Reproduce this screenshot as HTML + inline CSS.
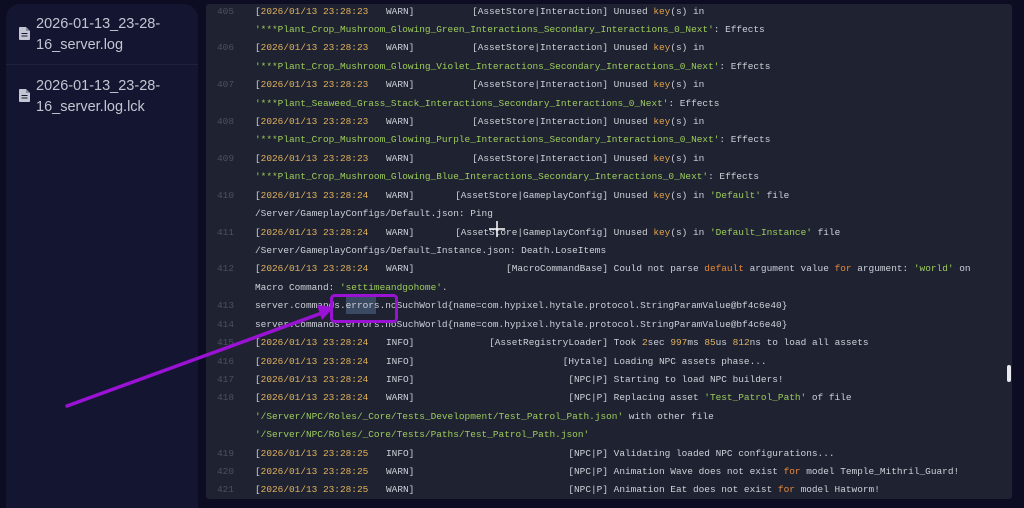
<!DOCTYPE html>
<html><head><meta charset="utf-8"><style>
*{margin:0;padding:0;box-sizing:border-box}
html,body{width:1024px;height:508px;overflow:hidden}
body{background:#0c0c22;position:relative;font-family:"Liberation Sans",sans-serif}
#side{position:absolute;left:6px;top:4px;width:192px;height:504px;background:#141631;border-radius:14px 14px 0 0}
.item{position:absolute;left:30px;color:#c3c6d2;font-size:14.5px;line-height:21px}
.ic{position:absolute;left:13px;width:11px;height:13px}
#div{position:absolute;left:0;top:60px;width:192px;height:1px;background:#20223a}
#log{position:absolute;left:206px;top:4px;width:806px;height:495px;background:#1f2230;border-radius:3px;overflow:hidden;font-family:"Liberation Mono",monospace;font-size:9.45px;color:#cdd1d9}
.r{position:absolute;left:0;height:18.42px;line-height:18.42px;white-space:pre;width:806px}
.n{position:absolute;left:11px;color:#4b5161}
.t{position:absolute;left:49px}
.l{position:absolute;left:180px}
.g{position:absolute;right:404px;text-align:right}
.m{position:absolute;left:402px}
.c{position:absolute;left:49px}
.o{color:#e2b35c}.s{color:#9ccc5c}.k{color:#e0a24e}.f{color:#e8893a}
#thumb{position:absolute;left:1007px;top:365px;width:4px;height:17px;background:#e8eaf0;border-radius:2px}
</style></head><body>
<div id="side">
<svg class="ic" style="top:23px" viewBox="0 0 11 13"><path d="M0 1a1 1 0 0 1 1-1h6l4 4v8a1 1 0 0 1-1 1H1a1 1 0 0 1-1-1z" fill="#c3c6d2"/><path d="M7 0v4h4" fill="#8a8ea0"/><rect x="2.5" y="6" width="6" height="1" fill="#141631"/><rect x="2.5" y="8.5" width="6" height="1" fill="#141631"/></svg>
<div class="item" style="top:10px">2026-01-13_23-28-<br>16_server.log</div>
<div id="div"></div>
<svg class="ic" style="top:85px" viewBox="0 0 11 13"><path d="M0 1a1 1 0 0 1 1-1h6l4 4v8a1 1 0 0 1-1 1H1a1 1 0 0 1-1-1z" fill="#c3c6d2"/><path d="M7 0v4h4" fill="#8a8ea0"/><rect x="2.5" y="6" width="6" height="1" fill="#141631"/><rect x="2.5" y="8.5" width="6" height="1" fill="#141631"/></svg>
<div class="item" style="top:72px">2026-01-13_23-28-<br>16_server.log.lck</div>
</div>
<div id="log">
<div class="r" style="top:-1.5px"><span class="n">405</span><span class="t">[<span class="o">2026/01/13 23:28:23</span></span><span class="l">WARN]</span><span class="g">[AssetStore|Interaction]</span><span class="m"> Unused <span class="k">key</span>(s) in</span></div>
<div class="r" style="top:16.9px"><span class="c"><span class="s">'***Plant_Crop_Mushroom_Glowing_Green_Interactions_Secondary_Interactions_0_Next'</span>: Effects</span></div>
<div class="r" style="top:35.3px"><span class="n">406</span><span class="t">[<span class="o">2026/01/13 23:28:23</span></span><span class="l">WARN]</span><span class="g">[AssetStore|Interaction]</span><span class="m"> Unused <span class="k">key</span>(s) in</span></div>
<div class="r" style="top:53.8px"><span class="c"><span class="s">'***Plant_Crop_Mushroom_Glowing_Violet_Interactions_Secondary_Interactions_0_Next'</span>: Effects</span></div>
<div class="r" style="top:72.2px"><span class="n">407</span><span class="t">[<span class="o">2026/01/13 23:28:23</span></span><span class="l">WARN]</span><span class="g">[AssetStore|Interaction]</span><span class="m"> Unused <span class="k">key</span>(s) in</span></div>
<div class="r" style="top:90.6px"><span class="c"><span class="s">'***Plant_Seaweed_Grass_Stack_Interactions_Secondary_Interactions_0_Next'</span>: Effects</span></div>
<div class="r" style="top:109px"><span class="n">408</span><span class="t">[<span class="o">2026/01/13 23:28:23</span></span><span class="l">WARN]</span><span class="g">[AssetStore|Interaction]</span><span class="m"> Unused <span class="k">key</span>(s) in</span></div>
<div class="r" style="top:127.4px"><span class="c"><span class="s">'***Plant_Crop_Mushroom_Glowing_Purple_Interactions_Secondary_Interactions_0_Next'</span>: Effects</span></div>
<div class="r" style="top:145.9px"><span class="n">409</span><span class="t">[<span class="o">2026/01/13 23:28:23</span></span><span class="l">WARN]</span><span class="g">[AssetStore|Interaction]</span><span class="m"> Unused <span class="k">key</span>(s) in</span></div>
<div class="r" style="top:164.3px"><span class="c"><span class="s">'***Plant_Crop_Mushroom_Glowing_Blue_Interactions_Secondary_Interactions_0_Next'</span>: Effects</span></div>
<div class="r" style="top:182.7px"><span class="n">410</span><span class="t">[<span class="o">2026/01/13 23:28:24</span></span><span class="l">WARN]</span><span class="g">[AssetStore|GameplayConfig]</span><span class="m"> Unused <span class="k">key</span>(s) in <span class="s">'Default'</span> file</span></div>
<div class="r" style="top:201.1px"><span class="c">/Server/GameplayConfigs/Default.json: Ping</span></div>
<div class="r" style="top:219.5px"><span class="n">411</span><span class="t">[<span class="o">2026/01/13 23:28:24</span></span><span class="l">WARN]</span><span class="g">[AssetStore|GameplayConfig]</span><span class="m"> Unused <span class="k">key</span>(s) in <span class="s">'Default_Instance'</span> file</span></div>
<div class="r" style="top:238px"><span class="c">/Server/GameplayConfigs/Default_Instance.json: Death.LoseItems</span></div>
<div class="r" style="top:256.4px"><span class="n">412</span><span class="t">[<span class="o">2026/01/13 23:28:24</span></span><span class="l">WARN]</span><span class="g">[MacroCommandBase]</span><span class="m"> Could not parse <span class="f">default</span> argument value <span class="f">for</span> argument: <span class="s">'world'</span> on</span></div>
<div class="r" style="top:274.8px"><span class="c">Macro Command: <span class="s">'settimeandgohome'</span>.</span></div>
<div style="position:absolute;left:140px;top:293px;width:30px;height:17px;background:#3a4a62"></div>
<div class="r" style="top:293.2px"><span class="n">413</span><span class="c">server.commands.errors.noSuchWorld{name=com.hypixel.hytale.protocol.StringParamValue@bf4c6e40}</span></div>
<div class="r" style="top:311.6px"><span class="n">414</span><span class="c">server.commands.errors.noSuchWorld{name=com.hypixel.hytale.protocol.StringParamValue@bf4c6e40}</span></div>
<div class="r" style="top:330.1px"><span class="n">415</span><span class="t">[<span class="o">2026/01/13 23:28:24</span></span><span class="l">INFO]</span><span class="g">[AssetRegistryLoader]</span><span class="m"> Took <span class="o">2</span>sec <span class="o">997</span>ms <span class="o">85</span>us <span class="o">812</span>ns to load all assets</span></div>
<div class="r" style="top:348.5px"><span class="n">416</span><span class="t">[<span class="o">2026/01/13 23:28:24</span></span><span class="l">INFO]</span><span class="g">[Hytale]</span><span class="m"> Loading NPC assets phase...</span></div>
<div class="r" style="top:366.9px"><span class="n">417</span><span class="t">[<span class="o">2026/01/13 23:28:24</span></span><span class="l">INFO]</span><span class="g">[NPC|P]</span><span class="m"> Starting to load NPC builders!</span></div>
<div class="r" style="top:385.3px"><span class="n">418</span><span class="t">[<span class="o">2026/01/13 23:28:24</span></span><span class="l">WARN]</span><span class="g">[NPC|P]</span><span class="m"> Replacing asset <span class="s">'Test_Patrol_Path'</span> of file</span></div>
<div class="r" style="top:403.7px"><span class="c"><span class="s">'/Server/NPC/Roles/_Core/Tests_Development/Test_Patrol_Path.json'</span> with other file</span></div>
<div class="r" style="top:422.2px"><span class="c"><span class="s">'/Server/NPC/Roles/_Core/Tests/Paths/Test_Patrol_Path.json'</span></span></div>
<div class="r" style="top:440.6px"><span class="n">419</span><span class="t">[<span class="o">2026/01/13 23:28:25</span></span><span class="l">INFO]</span><span class="g">[NPC|P]</span><span class="m"> Validating loaded NPC configurations...</span></div>
<div class="r" style="top:459px"><span class="n">420</span><span class="t">[<span class="o">2026/01/13 23:28:25</span></span><span class="l">WARN]</span><span class="g">[NPC|P]</span><span class="m"> Animation Wave does not exist <span class="f">for</span> model Temple_Mithril_Guard!</span></div>
<div class="r" style="top:477.4px"><span class="n">421</span><span class="t">[<span class="o">2026/01/13 23:28:25</span></span><span class="l">WARN]</span><span class="g">[NPC|P]</span><span class="m"> Animation Eat does not exist <span class="f">for</span> model Hatworm!</span></div>
</div>
<div id="thumb"></div>
<svg style="position:absolute;left:0;top:0" width="1024" height="508">
<rect x="331.5" y="295.5" width="65" height="26" rx="3" fill="none" stroke="#9a12d4" stroke-width="3"/>
<line x1="67" y1="406" x2="322" y2="313" stroke="#9a12d4" stroke-width="3.5" stroke-linecap="round"/>
<polygon points="334,307 317,305 322,320" fill="#9a12d4"/>
<g stroke="#fff" stroke-width="1.5"><line x1="497" y1="221" x2="497" y2="237"/><line x1="489" y1="229" x2="505" y2="229"/></g>
</svg>
</body></html>
